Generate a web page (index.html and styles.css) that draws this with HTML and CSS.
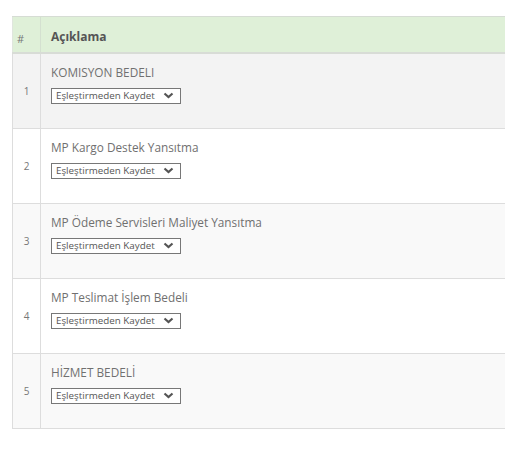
FILE: index.html
```html
<!DOCTYPE html>
<html>
<head>
<meta charset="utf-8">
<link rel="stylesheet" href="styles.css">
</head>
<body>
<div class="wrap">
<table class="grid">
  <thead>
    <tr><th class="num">#</th><th class="desc">Açıklama</th></tr>
  </thead>
  <tbody>
    <tr class="r-hover"><td class="num">1</td><td class="desc"><div class="title">KOMISYON BEDELI</div><div class="sel"><span>Eşleştirmeden Kaydet</span><svg width="11" height="7" viewBox="0 0 11 7"><path d="M1.5 1.5 L5.5 5 L9.5 1.5" fill="none" stroke="#555" stroke-width="2.2"/></svg></div></td></tr>
    <tr><td class="num">2</td><td class="desc"><div class="title">MP Kargo Destek Yansıtma</div><div class="sel"><span>Eşleştirmeden Kaydet</span><svg width="11" height="7" viewBox="0 0 11 7"><path d="M1.5 1.5 L5.5 5 L9.5 1.5" fill="none" stroke="#555" stroke-width="2.2"/></svg></div></td></tr>
    <tr class="r-odd"><td class="num">3</td><td class="desc"><div class="title">MP Ödeme Servisleri Maliyet Yansıtma</div><div class="sel"><span>Eşleştirmeden Kaydet</span><svg width="11" height="7" viewBox="0 0 11 7"><path d="M1.5 1.5 L5.5 5 L9.5 1.5" fill="none" stroke="#555" stroke-width="2.2"/></svg></div></td></tr>
    <tr><td class="num">4</td><td class="desc"><div class="title">MP Teslimat İşlem Bedeli</div><div class="sel"><span>Eşleştirmeden Kaydet</span><svg width="11" height="7" viewBox="0 0 11 7"><path d="M1.5 1.5 L5.5 5 L9.5 1.5" fill="none" stroke="#555" stroke-width="2.2"/></svg></div></td></tr>
    <tr class="r-odd"><td class="num">5</td><td class="desc"><div class="title">HİZMET BEDELİ</div><div class="sel"><span>Eşleştirmeden Kaydet</span><svg width="11" height="7" viewBox="0 0 11 7"><path d="M1.5 1.5 L5.5 5 L9.5 1.5" fill="none" stroke="#555" stroke-width="2.2"/></svg></div></td></tr>
  </tbody>
</table>
</div>
</body>
</html>
```
FILE: styles.css
```css
html, body { margin: 0; padding: 0; background: #fff; }
body { font-family: "Open Sans", "DejaVu Sans", sans-serif; color: #666; }
.wrap { padding: 16px 0 0 12px; overflow: hidden; width: 493px; }
.grid { border-collapse: collapse; width: 620px; }
.grid th { background: #dff0d8; height: 32px; padding: 0; text-align: left; border-top: 1px solid #d6dcd4; border-bottom: 2px solid #d8dcd6; }
.grid th.num { width: 28px; font-weight: normal; font-size: 11px; color: #777; vertical-align: bottom; padding: 0 0 6px 4px; box-sizing: border-box; border-left: 1px solid #e0e6de; border-right: 1px solid #d4e0d0; }
.grid th.desc { font-size: 12px; font-weight: bold; color: #555; padding-left: 10px; padding-top: 3px; }
.grid td { border-bottom: 1px solid #ddd; padding: 0; height: 66px; }
.grid td.num { width: 28px; box-sizing: border-box; border-left: 1px solid #ddd; border-right: 1px solid #ddd; text-align: center; font-size: 10px; color: #777; vertical-align: middle; }
.grid td.desc { vertical-align: top; padding: 8px 0 0 10px; }
.r-hover td { background: #f3f3f3; }
.r-odd td { background: #f9f9f9; }
.title { font-size: 11.8px; line-height: 20px; color: #707070; }
.sel { display: inline-flex; align-items: center; justify-content: space-between; box-sizing: border-box; width: 130px; height: 16px; margin-top: 5px; border: 1px solid #777; background: #fff; padding: 0 6px 0 4px; font-size: 9.8px; color: #555; }
.sel svg { display: block; }
```
